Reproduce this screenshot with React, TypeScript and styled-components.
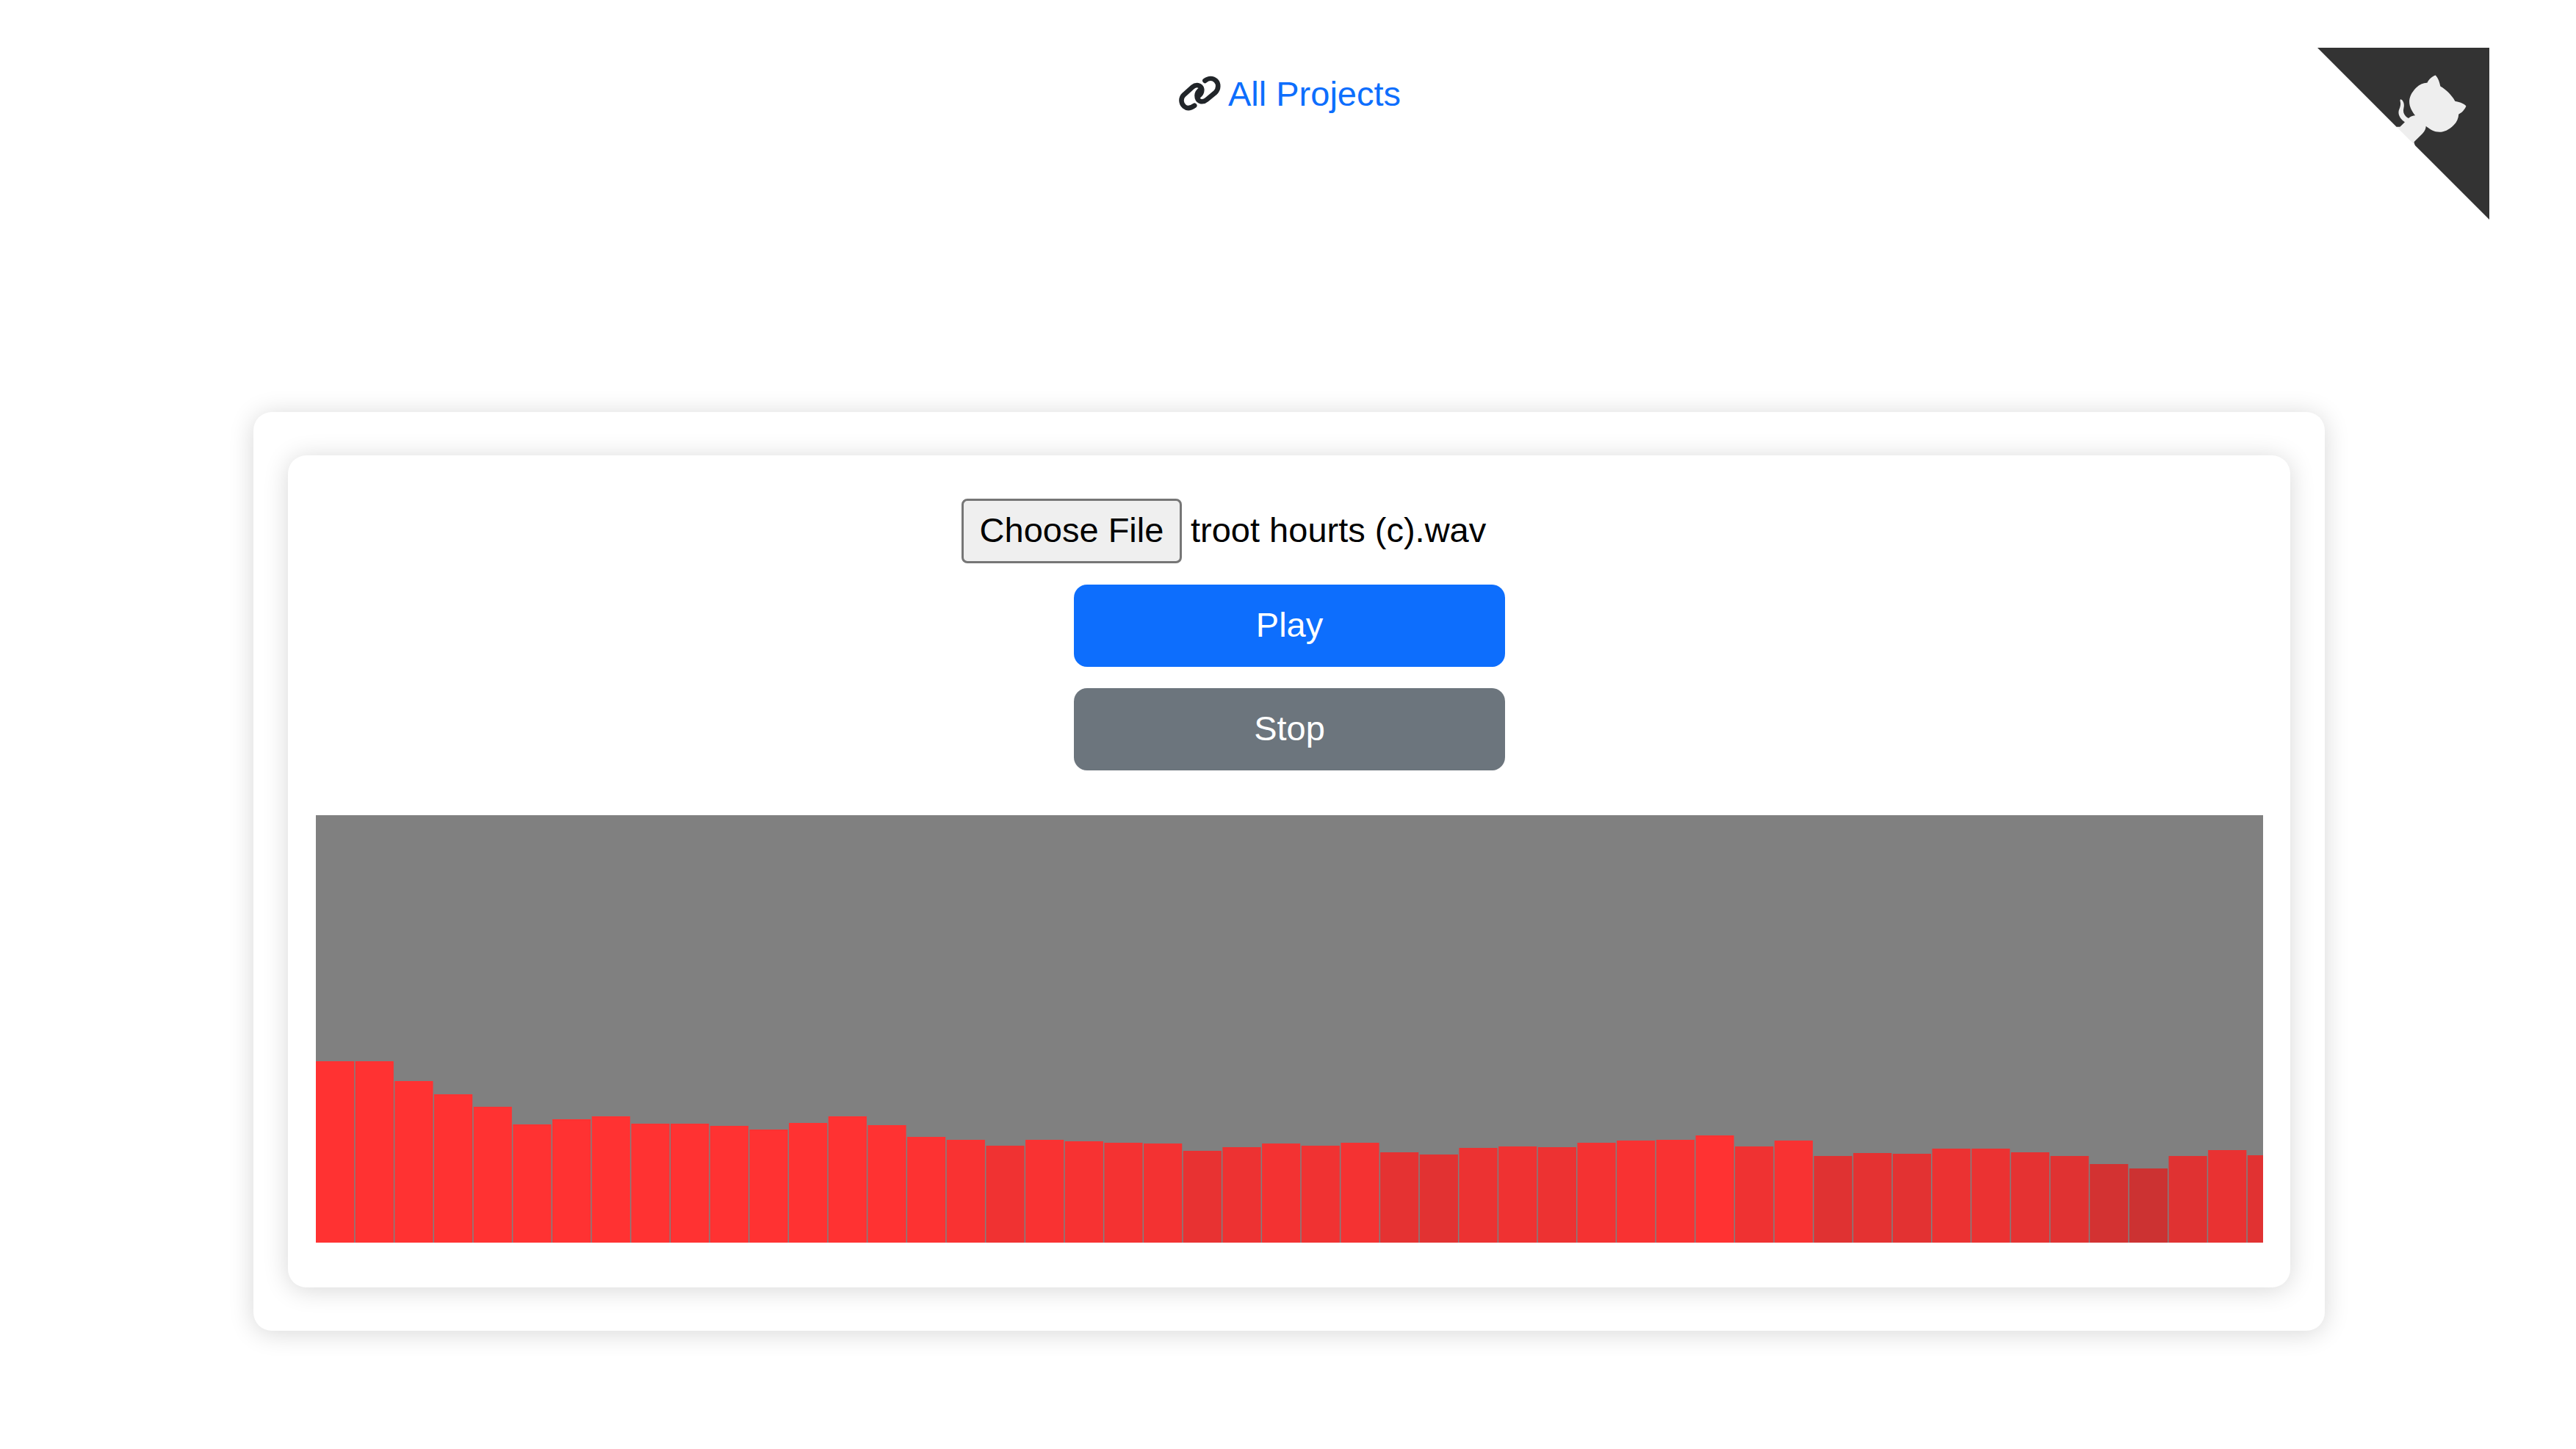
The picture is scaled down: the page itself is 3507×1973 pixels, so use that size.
import React from "react";
import styled, { createGlobalStyle } from "styled-components";

const Global = createGlobalStyle`
  html, body { margin: 0; padding: 0; background: #fff; }
  body { font-family: "Liberation Sans", Arial, sans-serif; color: #000; }
`;

const Page = styled.div`
  position: relative;
  box-sizing: border-box;
  width: 3507px;
  height: 1973px;
  padding-left: 3px;
  overflow: hidden;
  display: flex;
  flex-direction: column;
  align-items: center;
`;

const Header = styled.header`
  height: 561px;
  box-sizing: border-box;
  padding-top: 95px;
  padding-left: 1px;
  display: flex;
  justify-content: center;
`;

const ProjectsLink = styled.a`
  display: flex;
  align-items: center;
  gap: 10px;
  height: 66px;
  font-size: 47px;
  line-height: 66px;
  color: #0d6efd;
  text-decoration: none;
`;

const LinkIcon = styled.svg`
  width: 58px;
  height: 48px;
  margin-top: -3px;
  fill: none;
  stroke: #212529;
  stroke-width: 20;
  stroke-linecap: round;
  stroke-linejoin: round;
`;

const Corner = styled.svg`
  position: absolute;
  top: 65px;
  right: 118px;
  width: 234px;
  height: 234px;
  fill: #333;
  color: #eee;
`;

const OuterCard = styled.section`
  box-sizing: border-box;
  width: 2820px;
  height: 1251px;
  padding: 59px 47px;
  border-radius: 25px;
  background: #fff;
  box-shadow: 0 3px 34px rgba(0, 0, 0, 0.16);
`;

const InnerCard = styled.div`
  box-sizing: border-box;
  height: 1133px;
  padding: 59px 37px 0 38px;
  border-radius: 25px;
  background: #fff;
  box-shadow: 0 3px 34px rgba(0, 0, 0, 0.16);
  display: flex;
  flex-direction: column;
  align-items: center;
`;

const FileRow = styled.div`
  display: flex;
  align-items: center;
  gap: 12px;
  width: 893px;
  height: 88px;
  margin-bottom: 29px;
  font-size: 47px;
`;

const FileButton = styled.button`
  box-sizing: border-box;
  width: 300px;
  height: 88px;
  padding: 0 0 3px;
  border: 3px solid #767676;
  border-radius: 8px;
  background: #efefef;
  color: #000;
  font: inherit;
`;

const FileName = styled.span`
  margin-top: -3px;
  white-space: nowrap;
`;

const ActionButton = styled.button<{ $bg: string }>`
  box-sizing: border-box;
  width: 587px;
  height: 112px;
  margin-bottom: 29px;
  padding: 0 0 4px;
  border: 0;
  border-radius: 18px;
  background: ${(p) => p.$bg};
  color: #fff;
  font-family: inherit;
  font-size: 47px;
`;

const Spectrum = styled.svg`
  display: block;
  width: 2651px;
  height: 582px;
  margin-top: 32px;
  background: #808080;
  flex: none;
`;

const heights = [
  247, 247, 220, 202, 185, 161, 168, 172, 162, 162, 159, 154, 163, 172, 160, 144, 140,
  132, 140, 138, 136, 135, 125, 130, 135, 132, 136, 123, 120, 129, 131, 130, 136,
  139, 140, 146, 131, 139, 118, 122, 121, 128, 128, 123, 118, 107, 101, 118, 126, 119,
];

const PITCH = 53.67;
const BAR_WIDTH = 52.17;
const redFor = (h: number) => Math.min(255, Math.round(204 + (h - 101) * 1.15));

export default function App() {
  return (
    <Page>
      <Global />
      <Header>
        <ProjectsLink href="#">
          <LinkIcon viewBox="25 25 175 145">
            <path d="M92 148 C78 158 62 162 50 152 C36 140 34 118 48 104 L84 72 C98 60 118 62 122 80 C124 92 118 102 108 110" />
            <path d="M135 46 C150 34 168 34 180 46 C192 58 192 80 178 94 L142 124 C128 136 108 134 103 116 C100 104 104 94 112 86" />
          </LinkIcon>
          All Projects
        </ProjectsLink>
      </Header>
      <Corner viewBox="0 0 250 250" aria-hidden="true">
        <path d="M0,0 L115,115 L130,115 L142,142 L250,250 L250,0 Z" />
        <path
          d="M128.3,109.0 C113.8,99.7 119.0,89.6 119.0,89.6 C122.0,82.7 120.5,78.6 120.5,78.6 C119.2,72.0 123.4,76.3 123.4,76.3 C127.3,80.9 125.5,87.3 125.5,87.3 C122.9,97.6 130.6,101.9 134.4,103.2"
          fill="currentColor"
        />
        <path
          d="M115.0,115.0 C114.9,115.1 118.7,116.5 119.8,115.4 L133.7,101.6 C136.9,99.2 139.9,98.4 142.2,98.6 C133.8,88.0 127.5,74.4 143.8,58.0 C148.5,53.4 154.0,51.2 159.7,51.0 C160.3,49.4 163.2,43.6 171.4,40.1 C171.4,40.1 176.1,42.5 178.8,56.2 C183.1,58.6 187.2,61.8 190.9,65.4 C194.5,69.0 197.7,73.2 200.1,77.6 C213.8,80.2 216.3,84.9 216.3,84.9 C212.7,93.1 206.9,96.0 205.4,96.6 C205.1,102.4 203.0,107.8 198.3,112.5 C181.9,128.9 168.3,122.5 157.7,114.1 C157.9,116.9 156.7,120.9 152.7,124.9 L141.0,136.5 C139.8,137.7 141.6,141.9 141.8,141.8 Z"
          fill="currentColor"
        />
      </Corner>
      <OuterCard>
        <InnerCard>
          <FileRow>
            <FileButton type="button">Choose File</FileButton>
            <FileName>troot hourts (c).wav</FileName>
          </FileRow>
          <ActionButton type="button" $bg="#0d6efd">Play</ActionButton>
          <ActionButton type="button" $bg="#6c757d">Stop</ActionButton>
          <Spectrum viewBox="0 0 2651 582">
            {heights.map((h, i) => (
              <rect
                key={i}
                x={i * PITCH}
                y={582 - h}
                width={BAR_WIDTH}
                height={h}
                fill={`rgb(${redFor(h)},50,50)`}
              />
            ))}
          </Spectrum>
        </InnerCard>
      </OuterCard>
    </Page>
  );
}
